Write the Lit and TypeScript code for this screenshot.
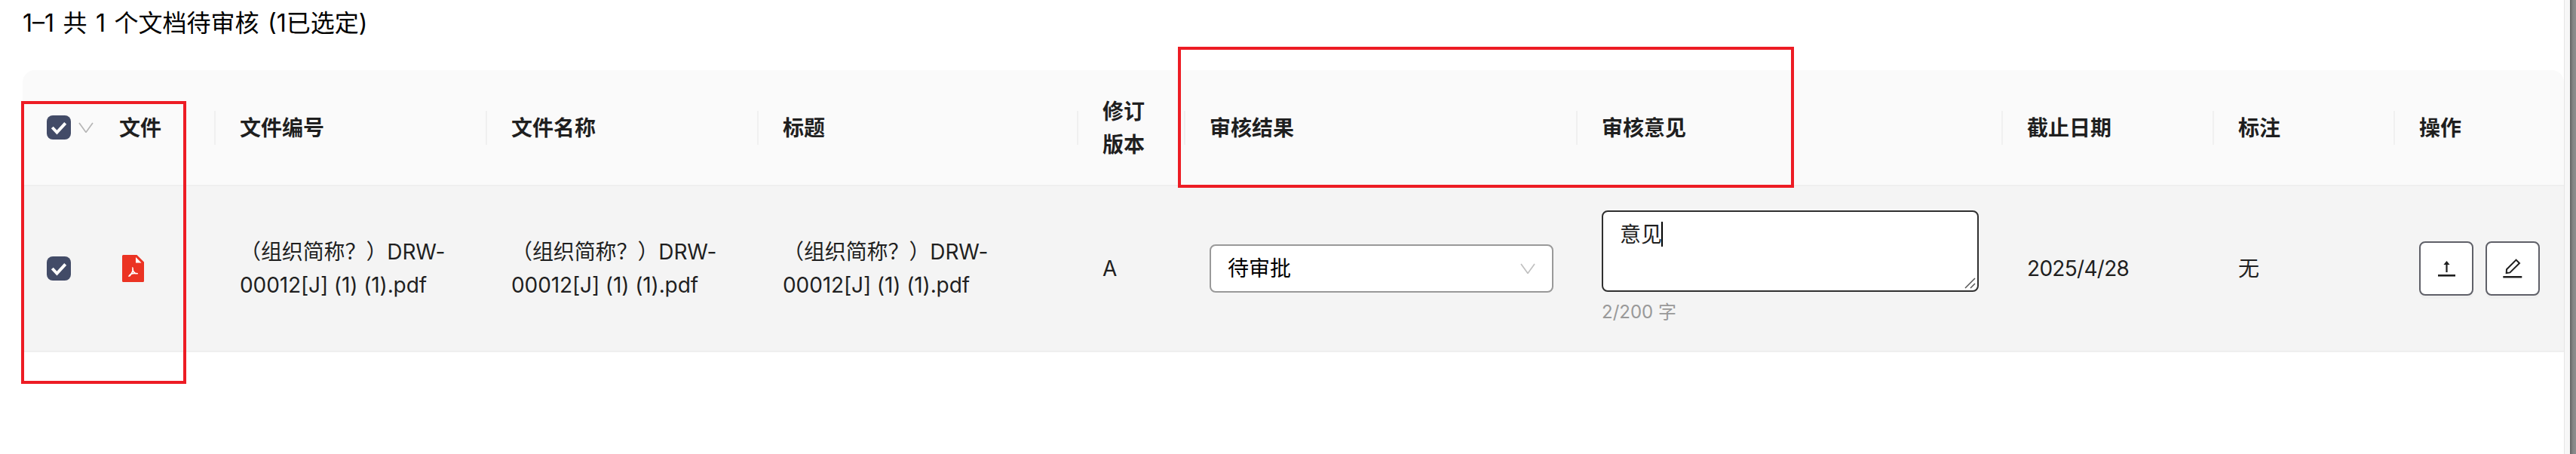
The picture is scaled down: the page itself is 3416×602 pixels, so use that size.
import { LitElement, html, svg, css, nothing } from "lit";
import { customElement, property, state } from "lit/decorators.js";
import { classMap } from "lit/directives/class-map.js";

interface DocumentRow {
	name: string[];
	revision: string;
	result: string;
	comment: string;
	due: string;
	markup: string;
}

const columns = [
	{ key: "file", lines: ["文件"] },
	{ key: "number", lines: ["文件编号"] },
	{ key: "name", lines: ["文件名称"] },
	{ key: "title", lines: ["标题"] },
	{ key: "revision", lines: ["修订", "版本"] },
	{ key: "result", lines: ["审核结果"] },
	{ key: "comment", lines: ["审核意见"] },
	{ key: "due", lines: ["截止日期"] },
	{ key: "markup", lines: ["标注"] },
	{ key: "actions", lines: ["操作"] },
];

const shapes = {
	down: svg`<path d="M1 1 10 13.4 19 1" fill="none" stroke="currentColor" stroke-width="1.7"/>`,
	upload: svg`
		<path d="M11.5 1 15.6 6H12.6V16H10.4V6H7.4Z" fill="currentColor"/>
		<path d="M0 19h23v2.6H0Z" fill="currentColor"/>`,
	edit: svg`
		<path d="M4.7 19 5 14.2 17.6 1.6 22 6 9.4 18.4Z" fill="none" stroke="currentColor" stroke-width="2"/>
		<path d="M.3 23h25v2.5H.3Z" fill="currentColor"/>`,
	pdf: svg`
		<path d="M1.5 0H19.5L29 9.5V34.5A1.5 1.5 0 0 1 27.5 36H1.500A1.5 1.5 0 0 1 0 34.5V1.5A1.5 1.5 0 0 1 1.5 0Z" fill="#eb3323"/>
		<path d="M18 3V10.5H25.5Z" fill="#fff"/>
		<g fill="none" stroke="#fff" stroke-width="1.6" stroke-linecap="round">
			<path d="M13.8 17C14.8 19.500 13.800 22.500 12 25.200M13.800 19.500C14.300 21.500 15.800 23.500 18 25M11.500 25.500C13.500 24.600 16.500 24 20.300 24.700"/>
			<path d="M11.800 25.200C10.500 26 9.300 27 8.800 28.200C10.200 28.300 11.200 27 11.800 25.200" stroke-width="1.300"/>
		</g>`,
};

@customElement("review-icon")
export class ReviewIcon extends LitElement
{
	static styles = css`
		:host { display: block; flex: none; }
		svg { display: block; }
	`

	@property({ type: String }) name: keyof typeof shapes = "down";
	@property({ type: Number }) width = 20;
	@property({ type: Number }) height = 14;

	render()
	{
		return html`<svg width=${this.width} height=${this.height} viewBox="0 0 ${this.width} ${this.height}">${shapes[this.name]}</svg>`
	}
}

@customElement("review-checkbox")
export class ReviewCheckbox extends LitElement
{
	static styles = css`
		:host { display: block; flex: none; }

		.box {
			width: 32px;
			height: 32px;
			border-radius: 8px;
			background: #fff;
			box-shadow: inset 0 0 0 2px #999;
		}

		.box.on {
			background: #424b67;
			box-shadow: none;
		}

		svg { display: block; }
	`

	@property({ type: Boolean }) checked = false;

	render()
	{
		return html`
			<div class=${classMap({ box: true, on: this.checked })}>
				${this.checked ? html`
					<svg width="32" height="32" viewBox="0 0 32 32">
						<path d="M7.3 16 13.5 22.6 24.7 10.4" fill="none" stroke="#fff" stroke-width="4"/>
					</svg>` : nothing}
			</div>
		`
	}
}

@customElement("app-root")
export class AppRoot extends LitElement
{
	static styles = css`
		:host {
			display: block;
			position: relative;
			height: 602px;
			overflow: hidden;
			background: #fff;
			color: #1f1f1f;
			font-family: Inter, "Noto Sans CJK SC", sans-serif;
			font-size: 28px;
			line-height: 44px;
		}

		* { box-sizing: border-box; }

		.page {
			display: grid;
			grid-template-columns: 1fr 8px 8px;
			height: 100%;
		}

		.main { padding-left: 30px; }

		.track {
			background: #f7f7f7;
			border-left: 1px solid #e6e6e6;
		}

		.edge { background: linear-gradient(90deg, #626363, #858686 50%, #8c8d8d); }

		.summary {
			height: 93px;
			padding-top: 6px;
			color: #000;
			font-size: 32px;
			line-height: 50px;
			word-spacing: 2.5px;
			white-space: nowrap;
		}

		.row {
			display: grid;
			grid-template-columns: 96px 160px 360px 360px 424px 142px 520px 564px 280px 240px 224px;
			align-items: center;
			border-bottom: 2px solid #efefef;
		}

		.head {
			height: 154px;
			border-radius: 16px 16px 0 0;
			background: #fafafa;
			font-weight: 600;
		}

		.body {
			height: 220px;
			background: #f4f4f4;
		}

		.cell {
			display: flex;
			align-items: center;
			padding: 0 32px;
			white-space: nowrap;
		}

		.head .cell {
			height: 45px;
			border-right: 2px solid #f0f0f0;
		}

		.head .cell:not(.pick) { padding-top: 2px; }

		.head .cell.pick, .head .cell.actions { border-right: none; }

		.cell.pick {
			gap: 10px;
			padding-right: 0;
		}

		.pick review-icon { color: #b5b5b5; }

		.file review-icon { margin-left: 4px; }

		.doc { letter-spacing: -0.1px; }

		.date { letter-spacing: -0.7px; }

		.select {
			display: flex;
			align-items: center;
			justify-content: space-between;
			width: 456px;
			height: 64px;
			padding: 0 22px;
			border: 2px solid #999;
			border-radius: 8px;
			background: #fff;
			color: #000;
		}

		.select review-icon { color: #bfbfbf; }

		.comment .field {
			display: flex;
			flex-direction: column;
			gap: 8px;
		}

		.textarea {
			display: flex;
			position: relative;
			width: 500px;
			height: 108px;
			padding: 8px 22px;
			border: 2px solid #303030;
			border-radius: 8px;
			background: #fff;
		}

		.caret {
			width: 2px;
			height: 33px;
			margin-top: 5px;
			margin-left: -1px;
			background: #000;
		}

		.grip {
			position: absolute;
			right: 2px;
			bottom: 2px;
		}

		.count {
			height: 38px;
			color: #999;
			font-size: 24px;
			line-height: 38px;
		}

		.cell.actions { gap: 16px; }

		.button {
			display: flex;
			align-items: center;
			justify-content: center;
			width: 72px;
			height: 72px;
			border: 2px solid #5f6068;
			border-radius: 8px;
			background: #fff;
			box-shadow: 0 4px 0 rgba(0, 0, 0, 0.02);
		}

		.mark {
			position: absolute;
			border: 4px solid #ed1c24;
			pointer-events: none;
		}

		.mark.files {
			top: 134px;
			left: 28px;
			width: 219px;
			height: 375px;
		}

		.mark.review {
			top: 62px;
			left: 1562px;
			width: 817px;
			height: 187px;
		}
	`

	@state() private rows: DocumentRow[] = [
		{
			name: ["（组织简称？）DRW-", "00012[J] (1) (1).pdf"],
			revision: "A",
			result: "待审批",
			comment: "意见",
			due: "2025/4/28",
			markup: "无",
		},
	];

	render()
	{
		return html`
			<div class="page">
				<div class="main">
					<div class="summary">1–1 共 1 个文档待审核 (1已选定)</div>
					<div class="row head">
						<div class="cell pick">
							<review-checkbox checked></review-checkbox>
							<review-icon name="down"></review-icon>
						</div>
						${columns.map(col => html`<div class="cell ${col.key}">${this.lines(col.lines)}</div>`)}
					</div>
					${this.rows.map(row => this.renderRow(row))}
				</div>
				<div class="track"></div>
				<div class="edge"></div>
			</div>
			<div class="mark files"></div>
			<div class="mark review"></div>
		`
	}

	private lines(text: string[])
	{
		return html`<div>${text.map(line => html`<div>${line}</div>`)}</div>`
	}

	private renderRow(row: DocumentRow)
	{
		return html`
			<div class="row body">
				<div class="cell pick"><review-checkbox checked></review-checkbox></div>
				<div class="cell file"><review-icon name="pdf" width="29" height="36"></review-icon></div>
				<div class="cell doc">${this.lines(row.name)}</div>
				<div class="cell doc">${this.lines(row.name)}</div>
				<div class="cell doc">${this.lines(row.name)}</div>
				<div class="cell">${row.revision}</div>
				<div class="cell">
					<div class="select">${row.result}<review-icon name="down"></review-icon></div>
				</div>
				<div class="cell comment">
					<div class="field">
						<div class="textarea">
							${row.comment}<span class="caret"></span>
							<svg class="grip" width="15" height="15" viewBox="0 0 15 15">
								<path d="M1 14 14 1M8 14 14 8" fill="none" stroke="#555" stroke-width="1.5"/>
							</svg>
						</div>
						<div class="count">${row.comment.length}/200 字</div>
					</div>
				</div>
				<div class="cell date">${row.due}</div>
				<div class="cell">${row.markup}</div>
				<div class="cell actions">
					<div class="button"><review-icon name="upload" width="23" height="22"></review-icon></div>
					<div class="button"><review-icon name="edit" width="26" height="26"></review-icon></div>
				</div>
			</div>
		`
	}
}
